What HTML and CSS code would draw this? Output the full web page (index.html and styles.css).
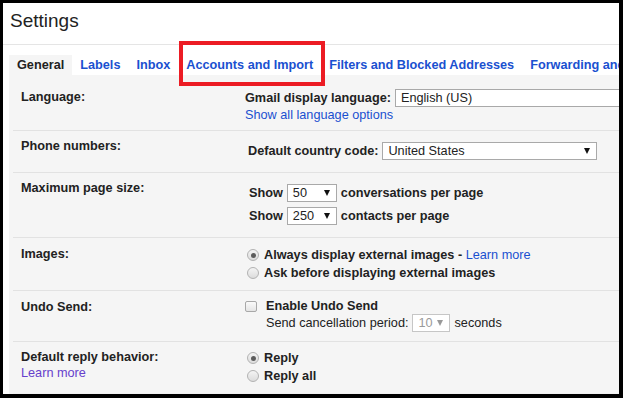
FILE: index.html
```html
<!DOCTYPE html>
<html lang="en">
<head>
    <meta charset="UTF-8">
    <meta name="viewport" content="width=device-width, initial-scale=1.0">
    <title>Settings - Gmail</title>
    <link rel="stylesheet" href="styles.css">
</head>
<body>
    <div class="frame">
        <div class="page-title">Settings</div>

        <div class="settings">
            <div class="tabs">
                <a class="tab active">General</a>
                <a class="tab" href="#">Labels</a>
                <a class="tab" href="#">Inbox</a>
                <a class="tab" href="#">Accounts and Import</a>
                <a class="tab" href="#">Filters and Blocked Addresses</a>
                <a class="tab" href="#">Forwarding and POP/IMAP</a>
            </div>

            <div class="panel">
                <div class="row row-language">
                    <div class="row-label">Language:</div>
                    <div class="row-value">
                        <div class="line">
                            <span class="strong">Gmail display language:</span>
                            <div class="select select-lang">English (US)</div>
                        </div>
                        <a class="link" href="#">Show all language options</a>
                    </div>
                </div>

                <div class="row row-select">
                    <div class="row-label">Phone numbers:</div>
                    <div class="row-value">
                        <div class="line indent-3">
                            <span class="strong">Default country code:</span>
                            <div class="select select-country">United States<i class="caret"></i></div>
                        </div>
                    </div>
                </div>

                <div class="row row-select">
                    <div class="row-label">Maximum page size:</div>
                    <div class="row-value">
                        <div class="line indent-4">
                            <span class="strong">Show</span>
                            <div class="select select-small">50<i class="caret"></i></div>
                            <span class="strong">conversations per page</span>
                        </div>
                        <div class="line indent-4 line-gap">
                            <span class="strong">Show</span>
                            <div class="select select-small">250<i class="caret"></i></div>
                            <span class="strong">contacts per page</span>
                        </div>
                    </div>
                </div>

                <div class="row row-radio">
                    <div class="row-label">Images:</div>
                    <div class="row-value">
                        <label class="line option">
                            <span class="radio checked"></span>
                            <span class="strong">Always display external images - <a class="link" href="#">Learn more</a></span>
                        </label>
                        <label class="line option">
                            <span class="radio"></span>
                            <span class="strong">Ask before displaying external images</span>
                        </label>
                    </div>
                </div>

                <div class="row row-undo">
                    <div class="row-label">Undo Send:</div>
                    <div class="row-value">
                        <label class="line line-short check-line">
                            <span class="checkbox"></span>
                            <span class="strong">Enable Undo Send</span>
                        </label>
                        <div class="line sub-line">
                            <span>Send cancellation period:</span>
                            <div class="select select-tiny disabled">10<i class="caret"></i></div>
                            <span>seconds</span>
                        </div>
                    </div>
                </div>

                <div class="row row-radio row-last">
                    <div class="row-label">
                        Default reply behavior:
                        <a class="link visited" href="#">Learn more</a>
                    </div>
                    <div class="row-value">
                        <label class="line option">
                            <span class="radio checked"></span>
                            <span class="strong">Reply</span>
                        </label>
                        <label class="line option">
                            <span class="radio"></span>
                            <span class="strong">Reply all</span>
                        </label>
                    </div>
                </div>
            </div>
        </div>

        <div class="highlight"></div>
    </div>
</body>
</html>
```

FILE: styles.css
```css
:root {
    --text: #222;
    --link: #1a50d0;
    --visited: #6640cc;
    --panel: #f5f5f5;
    --rule: #e2e2e2;
    --field-border: #a9a9a9;
}

* {
    margin: 0;
    padding: 0;
    box-sizing: border-box;
}

body {
    font-family: "Liberation Sans", Arial, sans-serif;
    font-size: 12.7px;
    color: var(--text);
    background: #000;
}

.frame {
    position: relative;
    width: 623px;
    height: 398px;
    background: #fff;
    border-style: solid;
    border-color: #000;
    border-width: 3px 4px 4px 3px;
    overflow: hidden;
}

.page-title {
    height: 42px;
    padding: 7px 0 0 7px;
    font-size: 19px;
    line-height: 22px;
    color: #222;
    border-bottom: 1px solid #e5e5e5;
}

.settings {
    margin: 10px 0 0 6px;
    width: 640px;
}

/* tab strip */
.tabs {
    display: flex;
    white-space: nowrap;
    height: 20px;
}

.tab {
    padding: 0 8px;
    line-height: 20px;
    font-weight: bold;
    color: var(--link);
    text-decoration: none;
}

.tab.active {
    color: var(--text);
    background: var(--panel);
}

/* settings table */
.panel {
    background: var(--panel);
    padding-left: 4px;
}

.row {
    display: flex;
    border-bottom: 1px solid var(--rule);
}

.row-last {
    border-bottom-color: #f0f0f0;
}

.row-label {
    width: 232px;
    flex-shrink: 0;
    padding: 7px 0 0 8px;
    line-height: 16px;
    font-weight: bold;
}

.row-label .link {
    display: block;
    font-weight: normal;
}

.row-value {
    flex: 1;
    line-height: 16px;
}

.row-language .row-label { padding-top: 14px; }
.row-language .row-value { padding: 14px 0 7px; }

.row-select .row-value { padding: 11px 0 12px; }

.row-radio .row-label { padding-top: 8px; }
.row-radio .row-value { padding: 8px 0 8px; }
.row-last .row-label { padding-top: 7px; }
.row-last .row-value { padding-top: 7px; }

.row-undo .row-label { padding-top: 8px; }
.row-undo .row-value { padding: 7px 0 9px; }

.line {
    display: flex;
    align-items: center;
    gap: 4px;
    height: 18px;
    white-space: nowrap;
}

.line-short {
    height: 16px;
}

.line-gap {
    margin-top: 5px;
}

.indent-3 { padding-left: 3px; }
.indent-4 { padding-left: 4px; }

.strong {
    font-weight: bold;
}

.link {
    color: var(--link);
    text-decoration: none;
    font-weight: normal;
}

.link.visited {
    color: var(--visited);
}

/* fake select boxes */
.select {
    position: relative;
    height: 18px;
    padding: 0 0 0 5px;
    line-height: 16px;
    background: #fff;
    border: 1px solid var(--field-border);
    font-weight: normal;
}

.select-lang { width: 240px; }
.select-country { width: 215px; }
.select-small { width: 50px; }
.select-tiny { width: 38px; }

.select.disabled {
    color: #9a9a9a;
    border-color: #c6c6c6;
}

.caret {
    position: absolute;
    right: 6px;
    top: 5px;
    width: 0;
    height: 0;
    border-left: 3.5px solid transparent;
    border-right: 3.5px solid transparent;
    border-top: 6px solid #111;
}

.disabled .caret {
    border-top-color: #999;
}

/* radios and checkbox */
.option {
    padding-left: 2px;
    gap: 5px;
}

.radio {
    position: relative;
    width: 12px;
    height: 12px;
    border-radius: 50%;
    border: 1px solid #b2b2b2;
    background: linear-gradient(#f4f4f4, #dcdcdc);
}

.radio.checked::after {
    content: "";
    position: absolute;
    left: 2.5px;
    top: 2.5px;
    width: 5px;
    height: 5px;
    border-radius: 50%;
    background: #5c5c5c;
}

.check-line {
    gap: 9px;
}

.checkbox {
    width: 12px;
    height: 11px;
    border: 1px solid #a8a8a8;
    border-radius: 2px;
    background: linear-gradient(#fafafa, #e4e4e4);
}

.sub-line {
    padding-left: 21px;
}

/* red annotation box around the tab */
.highlight {
    position: absolute;
    left: 176px;
    top: 38px;
    width: 146px;
    height: 45px;
    border: 4px solid #ec1c24;
}
```
